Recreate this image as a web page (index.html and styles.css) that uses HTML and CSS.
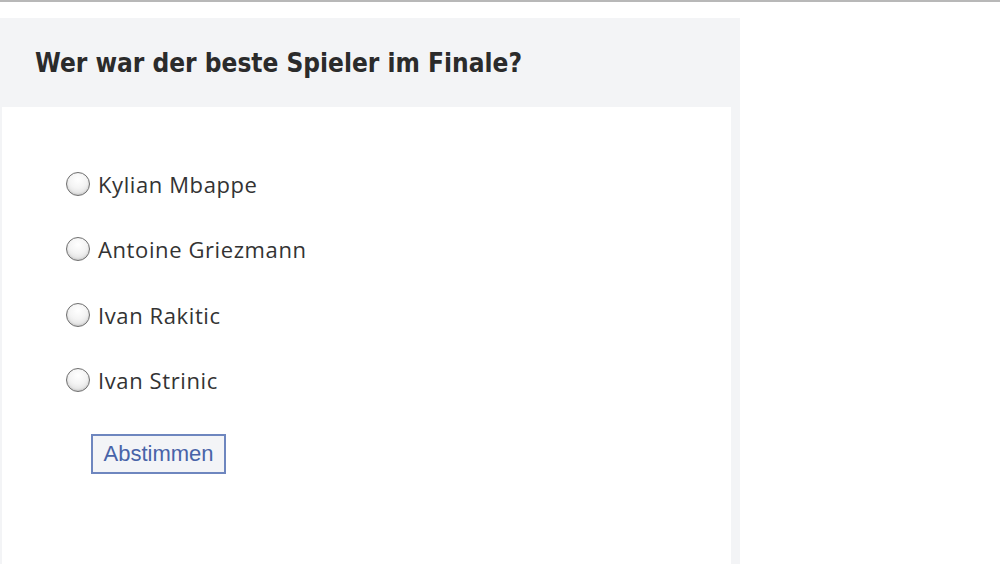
FILE: index.html
```html
<!DOCTYPE html>
<html lang="de">
<head>
<meta charset="utf-8">
<title>Umfrage</title>
<link rel="stylesheet" href="styles.css">
</head>
<body>
<div class="topline"></div>
<div class="panel">
  <div class="panel-head">
    <h2 class="question">Wer war der beste Spieler im Finale?</h2>
  </div>
  <form class="panel-body">
    <label class="option"><input type="radio" name="p" class="radio"><span>Kylian Mbappe</span></label>
    <label class="option"><input type="radio" name="p" class="radio"><span>Antoine Griezmann</span></label>
    <label class="option"><input type="radio" name="p" class="radio"><span>Ivan Rakitic</span></label>
    <label class="option"><input type="radio" name="p" class="radio"><span>Ivan Strinic</span></label>
    <div class="actions"><button type="button" class="vote">Abstimmen</button></div>
  </form>
</div>
</body>
</html>
```
FILE: styles.css
```css
html, body {
  margin: 0;
  padding: 0;
  background: #ffffff;
}
.topline {
  height: 2px;
  background: #b8b8b8;
}
.panel {
  margin-top: 16px;
  width: 740px;
  background: #f3f4f6;
  padding: 0 9px 0 2px;
  box-sizing: border-box;
  height: calc(100vh - 18px);
  display: flex;
  flex-direction: column;
}
.panel-head {
  height: 89px;
  flex: none;
  display: flex;
  align-items: center;
  padding-left: 33px;
}
.question {
  margin: 0;
  font-family: "DejaVu Sans Condensed", "DejaVu Sans", sans-serif;
  font-weight: bold;
  font-size: 26px;
  color: #2b2b2b;
}
.panel-body {
  background: #ffffff;
  flex: 1;
  margin: 0;
  padding: 44px 0 0 63px;
  display: flex;
  flex-direction: column;
  align-items: flex-start;
}
.option {
  display: flex;
  align-items: center;
  height: 65.5px;
  font-family: "Open Sans", sans-serif;
  font-size: 22px;
  letter-spacing: 0.6px;
  color: #333333;
  cursor: pointer;
}
.radio {
  appearance: none;
  -webkit-appearance: none;
  margin: 0 8px 0 1px;
  width: 24px;
  height: 24px;
  border-radius: 50%;
  border: 1px solid #6f6f6f;
  background: radial-gradient(circle at 50% 30%, #ffffff 0%, #f4f4f4 45%, #d6d6d6 100%);
  box-shadow: inset 0 -1px 2px rgba(0,0,0,0.12);
  box-sizing: border-box;
}
.actions {
  padding: 21px 0 0 26px;
}
.vote {
  font-family: "Liberation Sans", Arial, sans-serif;
  font-size: 22px;
  color: #4863a8;
  background: #f3f4f7;
  border: 2px solid #6e86bf;
  padding: 0;
  height: 40px;
  width: 135px;
  box-sizing: border-box;
  border-radius: 0;
}
```
